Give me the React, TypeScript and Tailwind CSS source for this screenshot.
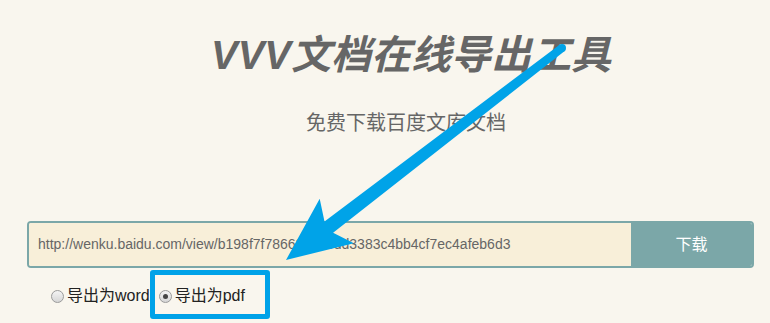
import React from "react";

function Radio({ checked }: { checked?: boolean }) {
  return (
    <span className="w-[13px] h-[13px] rounded-full border border-[#9a9a9a] bg-gradient-to-b from-[#f4f4f4] to-[#d6d6d6] flex items-center justify-center mr-[3px]">
      {checked ? <span className="w-[5px] h-[5px] rounded-full bg-[#444444]" /> : null}
    </span>
  );
}

export default function App() {
  return (
    <div
      className="relative w-[770px] h-[323px] overflow-hidden bg-[#f9f6ee] flex flex-col"
      style={{ fontFamily: '"Liberation Sans", "Noto Sans CJK SC", sans-serif' }}
    >
      <div className="pt-[29px] pl-[52px] flex justify-center">
        <h1 className="text-[40px] leading-[52px] font-bold italic text-[#666666]">
          VVV文档在线导出工具
        </h1>
      </div>
      <div className="mt-[28px] pl-[42px] flex justify-center">
        <p className="text-[20px] leading-[28px] text-[#666666]">免费下载百度文库文档</p>
      </div>
      <div className="mt-[84px] ml-[27px] mr-[16px] h-[47px] flex rounded-[4px] border-2 border-[#7ba7a8] overflow-hidden">
        <div className="flex-1 bg-[#f8efd9] flex items-center pl-[9px] text-[14px] text-[#666666]">
          http://wenku.baidu.com/view/b198f7f78662caaedd3383c4bb4cf7ec4afeb6d3
        </div>
        <button className="w-[121px] bg-[#7ba7a8] text-white text-[16px] flex items-center justify-center">
          下载
        </button>
      </div>
      <div className="mt-[17px] ml-[51px] h-[22px] flex items-center text-[16px] text-[#222222]">
        <label className="flex items-center">
          <Radio />
          <span>导出为word</span>
        </label>
        <label className="flex items-center ml-[9px]">
          <Radio checked />
          <span>导出为pdf</span>
        </label>
      </div>

      <div className="absolute left-[150px] top-[270px] w-[120px] h-[49px] border-[5px] border-[#00a2e8] rounded-[3px] pointer-events-none" />

      <svg
        className="absolute inset-0 pointer-events-none"
        width="770"
        height="323"
        viewBox="0 0 770 323"
      >
        <polygon
          points="286,260 319.7,198.8 324.5,221.6 559.6,44.8 564.4,51.2 333.1,232.7 353.9,243.2"
          fill="#00a3e8"
        />
        <circle cx="562" cy="48" r="4" fill="#00a3e8" />
      </svg>
    </div>
  );
}
